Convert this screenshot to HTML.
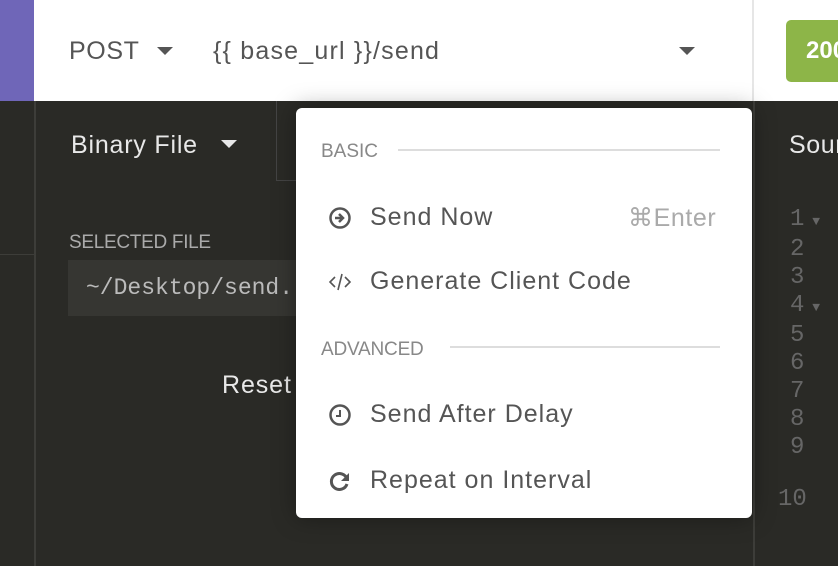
<!DOCTYPE html>
<html><head><style>
*{margin:0;padding:0;box-sizing:border-box}
body{width:838px;height:566px;overflow:hidden;background:#2a2a26;font-family:"Liberation Sans",sans-serif;position:relative}
.a{position:absolute}
.t{font-size:25px;letter-spacing:.6px}
.mi{position:absolute;left:328px;font-size:25px;letter-spacing:1px;color:#555;display:flex;align-items:center}
.mi svg{margin-right:18px}
.ln{position:absolute;left:790px;font-family:"Liberation Mono",monospace;font-size:24px;color:#666;line-height:28px}
</style></head><body>
<div class="a" style="left:0;top:0;width:34px;height:101px;background:#6f66b8"></div>
<div class="a" style="left:34px;top:0;width:804px;height:101px;background:#fff"></div>
<div class="a" style="left:752px;top:0;width:2px;height:101px;background:#e6e6e6"></div>
<div class="a t" style="left:69px;top:37px;color:#555">POST</div>
<div class="a" style="left:157px;top:47px;border-left:8px solid transparent;border-right:8px solid transparent;border-top:8px solid #555"></div>
<div class="a t" style="left:213px;top:37px;color:#555;letter-spacing:1.2px">{{ base_url }}/send</div>
<div class="a" style="left:679px;top:47px;border-left:8px solid transparent;border-right:8px solid transparent;border-top:8px solid #555"></div>
<div class="a" style="left:786px;top:20px;width:70px;height:62px;background:#8db548;border-radius:5px;color:#fff;font-size:24px;font-weight:bold;padding:17px 0 0 20px">200</div>
<div class="a" style="left:34px;top:101px;width:2px;height:465px;background:#3d3d39"></div>
<div class="a" style="left:0;top:254px;width:34px;height:1px;background:#3d3d39"></div>
<div class="a" style="left:753px;top:101px;width:2px;height:465px;background:#3d3d39"></div>
<div class="a" style="left:276px;top:101px;width:1px;height:80px;background:#444"></div>
<div class="a" style="left:276px;top:180px;width:22px;height:1px;background:#444"></div>
<div class="a t" style="left:71px;top:131px;color:#e8e8e8;letter-spacing:.8px">Binary File</div>
<div class="a" style="left:221px;top:140px;border-left:8px solid transparent;border-right:8px solid transparent;border-top:8px solid #e8e8e8"></div>
<div class="a" style="left:69px;top:232px;font-size:19px;color:#aaa;letter-spacing:-.3px">SELECTED FILE</div>
<div class="a" style="left:68px;top:260px;width:240px;height:56px;background:#363632"></div>
<div class="a" style="left:86px;top:275px;font-family:'Liberation Mono',monospace;font-size:23px;color:#bbb">~/Desktop/send.</div>
<div class="a t" style="left:222px;top:371px;color:#e8e8e8;letter-spacing:.9px">Reset</div>
<div class="a t" style="left:789px;top:131px;color:#e8e8e8">Sour</div>
<div class="ln" style="top:206px">1<span style="font-size:13px"> ▼</span><br>2<br>3<br>4<span style="font-size:13px"> ▼</span><br>5<br>6<br>7<br>8<br>9</div>
<div class="ln" style="top:486px;left:778px">10</div>
<div class="a" style="left:296px;top:108px;width:456px;height:410px;background:#fff;border-radius:6px;box-shadow:0 0 24px rgba(0,0,0,.35)"></div>
<div class="a" style="left:321px;top:141px;font-size:19px;color:#888">BASIC</div>
<div class="a" style="left:398px;top:149px;width:322px;height:2px;background:#ddd"></div>
<div class="a" style="left:321px;top:339px;font-size:19px;color:#888;letter-spacing:-.2px">ADVANCED</div>
<div class="a" style="left:450px;top:346px;width:270px;height:2px;background:#ddd"></div>
<div class="mi" style="top:203px"><svg width="24" height="24" viewBox="0 0 24 24"><circle cx="12" cy="12" r="9.5" fill="none" stroke="#555" stroke-width="2.5"/><path d="M7 12h7M11 8l4 4-4 4" fill="none" stroke="#555" stroke-width="2.5"/></svg>Send Now</div>
<div class="a t" style="left:628px;top:203px;color:#aaa">⌘Enter</div>
<div class="mi" style="top:267px;left:326px"><svg width="28" height="24" viewBox="0 0 26 24"><path d="M8 7l-5 5 5 5M18 7l5 5-5 5M15 4l-4 16" fill="none" stroke="#555" stroke-width="1.6"/></svg><span style="margin-left:-2px">Generate Client Code</span></div>
<div class="mi" style="top:400px"><svg width="24" height="24" viewBox="0 0 24 24"><circle cx="12" cy="12" r="9.5" fill="none" stroke="#555" stroke-width="2.5"/><path d="M12 7v6H8" fill="none" stroke="#555" stroke-width="2"/></svg>Send After Delay</div>
<div class="mi" style="top:466px"><svg width="24" height="24" viewBox="0 0 24 24"><path d="M19 10A8 8 0 1 0 19 15" fill="none" stroke="#555" stroke-width="3"/><path d="M21 4v8h-8z" fill="#555"/></svg>Repeat on Interval</div>
</body></html>
